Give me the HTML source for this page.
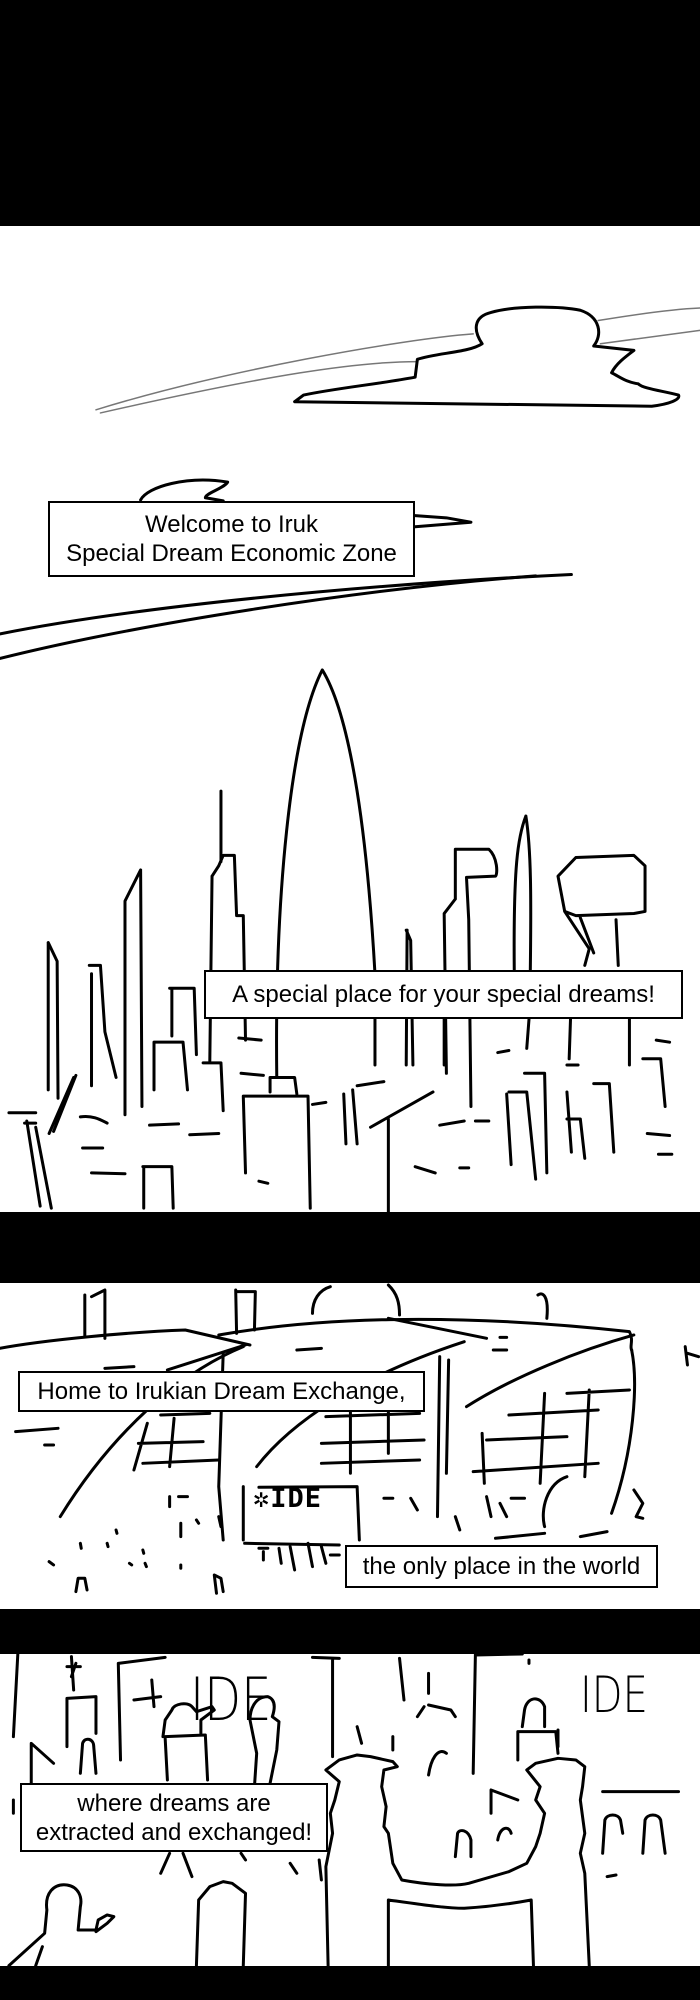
<!DOCTYPE html>
<html><head><meta charset="utf-8">
<style>
html,body{margin:0;padding:0;background:#fff;}
body{width:700px;height:2000px;position:relative;overflow:hidden;font-family:"Liberation Sans",Arial,sans-serif;}
.blk{position:absolute;left:0;width:700px;background:#000;}
.cap{position:absolute;background:#fff;border:2px solid #000;box-sizing:border-box;display:flex;align-items:center;justify-content:center;text-align:center;font-size:24px;line-height:29px;color:#000;}
svg{position:absolute;left:0;top:0;}
path{fill:none;stroke:#000;stroke-width:3;stroke-linecap:round;stroke-linejoin:round;vector-effect:non-scaling-stroke;}
.g{stroke:#777;stroke-width:1.5;}
.thin{position:absolute;font-family:"DejaVu Sans ExtraLight","DejaVu Sans",sans-serif;font-weight:200;color:#000;transform-origin:left top;}
</style></head><body>
<svg width="700" height="2000" viewBox="0 0 700 2000">
<g transform="scale(0.4464)">
<path class="g" d="M215,918 C500,830 900,760 1060,748"/>
<path class="g" d="M225,925 C600,840 800,810 935,810"/>
<path class="g" d="M1340,718 C1450,700 1520,692 1568,690"/>
<path class="g" d="M1345,770 L1568,740"/>
<path d="M660,900 L1460,910 C1500,905 1525,895 1520,885 C1480,875 1440,870 1430,860 C1400,855 1390,845 1370,835 C1380,815 1400,800 1420,785 L1330,775 C1350,750 1345,710 1300,695 C1250,685 1150,685 1100,700 C1060,710 1060,740 1080,770 C1050,790 980,790 935,805 L930,845 C850,860 750,870 680,885 Z" style="fill:#fff"/>
<path d="M315,1120 C330,1090 420,1065 510,1080 C500,1095 460,1105 460,1115 L500,1122"/>
<path d="M930,1155 L1000,1160 L1055,1170 L930,1180"/>
<path d="M0,1420 C300,1360 800,1310 1280,1287"/>
<path d="M0,1475 C300,1400 800,1320 1200,1290"/>
</g>
<g transform="translate(0,650) scale(0.4464,0.415)">
<path d="M620,1030 C615,600 650,200 722,48 C780,150 820,400 840,780"/>
<path d="M495,340 L495,510 M475,545 L490,520 L500,495 L525,495 L530,640 L545,640 L550,940 M475,545 L470,990"/>
<path d="M315,530 L280,605 L280,1120 M315,530 L318,1100"/>
<path d="M108,705 L128,750 L130,1080 M108,705 L108,1060"/>
<path d="M200,760 L225,760 L235,920 L260,1030 M205,780 L205,1050"/>
<path d="M380,815 L435,815 L440,975 M385,815 L385,930"/>
<path d="M345,945 L410,945 L420,1060 M345,945 L345,1060"/>
<path d="M455,995 L495,995 L500,1110"/>
<path d="M545,1075 L690,1075 L695,1345 M545,1075 L550,1260 M605,1065 L605,1030 L660,1030 L665,1070"/>
<path d="M320,1245 L385,1245 L388,1345 M322,1245 L322,1345"/>
<path d="M870,1130 L870,1355 M830,1150 L970,1065"/>
<path d="M1020,600 L1020,480 L1095,480 C1115,500 1115,540 1110,545 L1045,548 L1050,650 L1055,1100 M1020,600 L995,635 L1000,1020"/>
<path d="M1178,400 C1160,450 1150,520 1152,770 M1178,400 C1190,480 1190,600 1188,770"/>
<path d="M910,675 L920,700 L925,1000 M912,675 L910,1000"/>
<path d="M1290,500 L1420,495 L1445,520 L1445,630 L1420,635 L1290,640 L1265,630 L1250,545 Z M1265,630 L1320,720 L1310,760 M1380,650 L1385,760 M1300,645 L1330,730"/>
<path d="M1140,1065 L1180,1065 L1200,1275 M1175,1020 L1220,1020 L1225,1260 M1135,1070 L1145,1240"/>
<path d="M1270,1065 L1280,1210 M1330,1045 L1365,1045 L1375,1210 M1270,1130 L1300,1130 L1310,1225 M1440,985 L1480,985 L1490,1100"/>
<path d="M1278,890 L1275,985 M1410,890 L1410,1000 M1185,890 L1180,960 M840,890 L840,1000 M995,890 L995,1000"/>
<path d="M180,1125 C210,1120 230,1135 240,1140 M335,1145 L400,1142 M425,1168 L490,1165 M205,1260 L280,1262 M20,1115 L80,1115 M540,1020 L590,1025 M930,1245 L975,1260 M985,1145 L1040,1135 M1450,1165 L1500,1170 M1475,1215 L1505,1215 M1470,940 L1500,945 M535,935 L585,940 M1270,1000 L1295,1000 M1030,1248 L1050,1248 M1115,970 L1140,965 M580,1280 L600,1285 M1065,1135 L1095,1135 M800,1050 L860,1040 M185,1200 L230,1200"/>
<path d="M60,1135 L90,1340 M80,1150 L115,1345 M110,1165 L165,1030 M120,1160 L170,1025 M55,1140 L80,1140"/>
<path d="M770,1070 L775,1190 M790,1060 L800,1190 M700,1095 L730,1090"/>
</g>
<g transform="translate(0,1250) scale(0.4464,0.3333)">
<path d="M0,295 C100,270 300,245 415,240 L560,285"/>
<path d="M490,255 C700,205 1000,185 1410,245 C1420,270 1410,290 1415,300"/>
<path d="M870,205 L1090,265"/>
<path d="M190,135 L190,260 M205,140 L235,120 L235,265 M528,120 L530,250 M530,125 L572,125 L570,240 M700,190 C700,150 715,120 740,110 M870,105 C890,130 895,160 895,195 M1205,135 C1215,125 1230,135 1225,205"/>
<path d="M135,800 C250,550 400,370 545,290 M375,360 L550,285 M500,310 L490,710 L500,870"/>
<path d="M575,650 C650,520 800,380 1040,275 M985,320 L980,800 M1005,330 L1000,670"/>
<path d="M1045,470 C1150,380 1300,300 1420,255 M1415,300 C1430,400 1420,600 1370,790"/>
<path d="M330,520 L300,660 M390,505 L380,650 M310,580 L455,575 M320,640 L490,630 M360,495 L470,490"/>
<path d="M785,430 L785,670 M870,470 L870,610 M730,500 L940,490 M720,580 L950,570 M720,640 L940,630"/>
<path d="M1140,495 L1340,480 M1090,570 L1270,560 M1060,665 L1340,640 M1220,430 L1210,700 M1320,420 L1310,680 M1080,550 L1085,700 M1270,430 L1410,420"/>
<path d="M545,710 L545,870 M580,712 L800,710 L805,870 M548,880 L760,885"/>
<path d="M35,545 L130,535 M100,585 L120,585 M665,300 L720,295 M235,355 L300,350 M1105,300 L1135,300 M1120,262 L1135,262"/>
<path d="M170,1025 L175,985 L190,985 L195,1020 M485,1030 L480,975 L495,985 L500,1025 M1420,720 L1440,760 L1425,800 L1440,805"/>
<path d="M1220,830 C1210,780 1225,700 1270,680 M1110,865 L1220,850 M1300,860 L1360,845"/>
<path d="M380,740 L380,770 M400,740 L420,740 M405,820 L405,860 M440,810 L445,820 M490,800 L495,830 M260,840 L262,850 M180,880 L182,895 M240,880 L242,890 M320,900 L322,910 M290,940 L295,945 M325,940 L328,950 M405,945 L405,955 M110,935 L120,945 M860,745 L880,745 M920,745 L935,780 M1020,800 L1030,840 M1090,740 L1100,800 M1120,760 L1135,800 M1145,745 L1175,745 M1535,290 L1540,345 M1540,310 L1565,320"/>
<path d="M580,895 L600,895 M590,905 L590,930 M625,895 L630,940 M650,890 L660,960 M690,880 L700,950 M720,890 L730,940 M740,915 L760,915"/>
</g>
<g transform="translate(0,1600) scale(0.4464,0.3333)">
<path d="M40,160 L30,410 M265,190 L270,480 M265,190 L370,172 M745,180 L745,470 M700,172 L760,175 M1065,160 L1060,520 M1065,165 L1170,162 M1250,390 L1250,440 M895,175 L905,300 M1185,180 L1185,190"/>
<path d="M150,295 L150,440 M150,295 L215,290 L215,400 M370,410 L460,405 L465,540 M370,415 L375,540 M1160,395 L1245,395 L1250,460 M1160,395 L1160,480"/>
<path d="M160,170 L165,270 M150,200 L180,200 M170,190 L160,230 M960,220 L960,280 M950,320 L935,350 M960,315 L1010,330 L1020,350"/>
<path d="M365,410 L370,360 L385,330 C390,310 420,305 430,320 L440,335 L475,320 L480,330 L450,360 L450,400"/>
<path d="M570,560 L575,460 L560,360 C560,330 570,290 600,290 C620,300 615,330 610,350 L625,365 L620,450 L605,550"/>
<path d="M1170,380 L1175,330 C1180,290 1210,285 1220,320 L1220,380"/>
<path d="M735,1097 L730,800 L745,700 L740,640 L750,600 L760,545 L730,510 L760,480 L800,465 L830,470 L880,485 L890,500 L860,510 L855,560 L865,620 L860,680 L870,700 L880,790 L900,840 C960,855 1020,860 1050,850 L1140,815 L1180,790 L1200,740 L1210,700 L1220,640 L1200,600 L1210,560 L1180,510 L1200,490 L1250,475 L1290,480 L1310,500 L1305,560 L1300,600 L1310,700 L1300,760 L1310,820 L1320,1097"/>
<path d="M870,900 C950,915 1000,925 1040,925 C1100,920 1150,910 1190,900 L1195,1097 M870,900 L870,1097"/>
<path d="M20,1097 L100,1000 L105,930 C100,880 120,850 150,855 C175,860 185,890 180,920 L175,990 L215,990 L220,960 L240,945 L255,950 L240,970 L215,995 M95,1040 L80,1097"/>
<path d="M440,1097 L445,900 L470,860 L500,845 L520,850 L550,880 L545,1097"/>
<path d="M360,820 L380,760 M410,760 L430,830 M650,790 L665,820 M715,780 L720,840 M540,760 L550,780"/>
<path d="M960,525 C965,480 980,440 1000,460 M1020,770 L1025,700 C1030,685 1050,690 1055,720 L1055,770 M1115,720 C1120,680 1140,675 1145,700 M1350,760 L1355,660 C1360,640 1385,640 1390,660 L1395,700 M1440,760 L1445,660 C1450,640 1475,640 1480,660 L1490,760 M1350,575 L1520,575 M1100,570 L1100,640 M1100,570 L1160,600 M1360,830 L1380,825 M800,380 L810,430 M880,410 L880,450"/>
<path d="M70,550 L70,430 L120,490 M180,520 L185,430 C190,410 210,415 210,440 L215,520 M30,600 L30,640"/>
<path d="M300,300 L360,290 M340,240 L345,320"/>
</g>
</svg>
<div class="blk" style="top:0;height:226px"></div>
<div class="blk" style="top:1212px;height:71px"></div>
<div class="blk" style="top:1609px;height:45px"></div>
<div class="blk" style="top:1966px;height:34px"></div>
<div style="position:absolute;left:253px;top:1483px;font:bold 27px 'DejaVu Sans Mono','Liberation Mono',monospace;letter-spacing:1px">✲IDE</div>
<div class="thin" style="left:190px;top:1670px;font-size:60px;line-height:60px;transform:scaleX(0.8)">IDE</div>
<div class="thin" style="left:580px;top:1670px;font-size:50px;line-height:50px;transform:scaleX(0.8)">IDE</div>
<div class="cap" style="left:48px;top:501px;width:367px;height:76px">Welcome to Iruk<br>Special Dream Economic Zone</div>
<div class="cap" style="left:204px;top:970px;width:479px;height:49px">A special place for your special dreams!</div>
<div class="cap" style="left:18px;top:1371px;width:407px;height:41px">Home to Irukian Dream Exchange,</div>
<div class="cap" style="left:345px;top:1545px;width:313px;height:43px">the only place in the world</div>
<div class="cap" style="left:20px;top:1783px;width:308px;height:69px">where dreams are<br>extracted and exchanged!</div>
</body></html>
